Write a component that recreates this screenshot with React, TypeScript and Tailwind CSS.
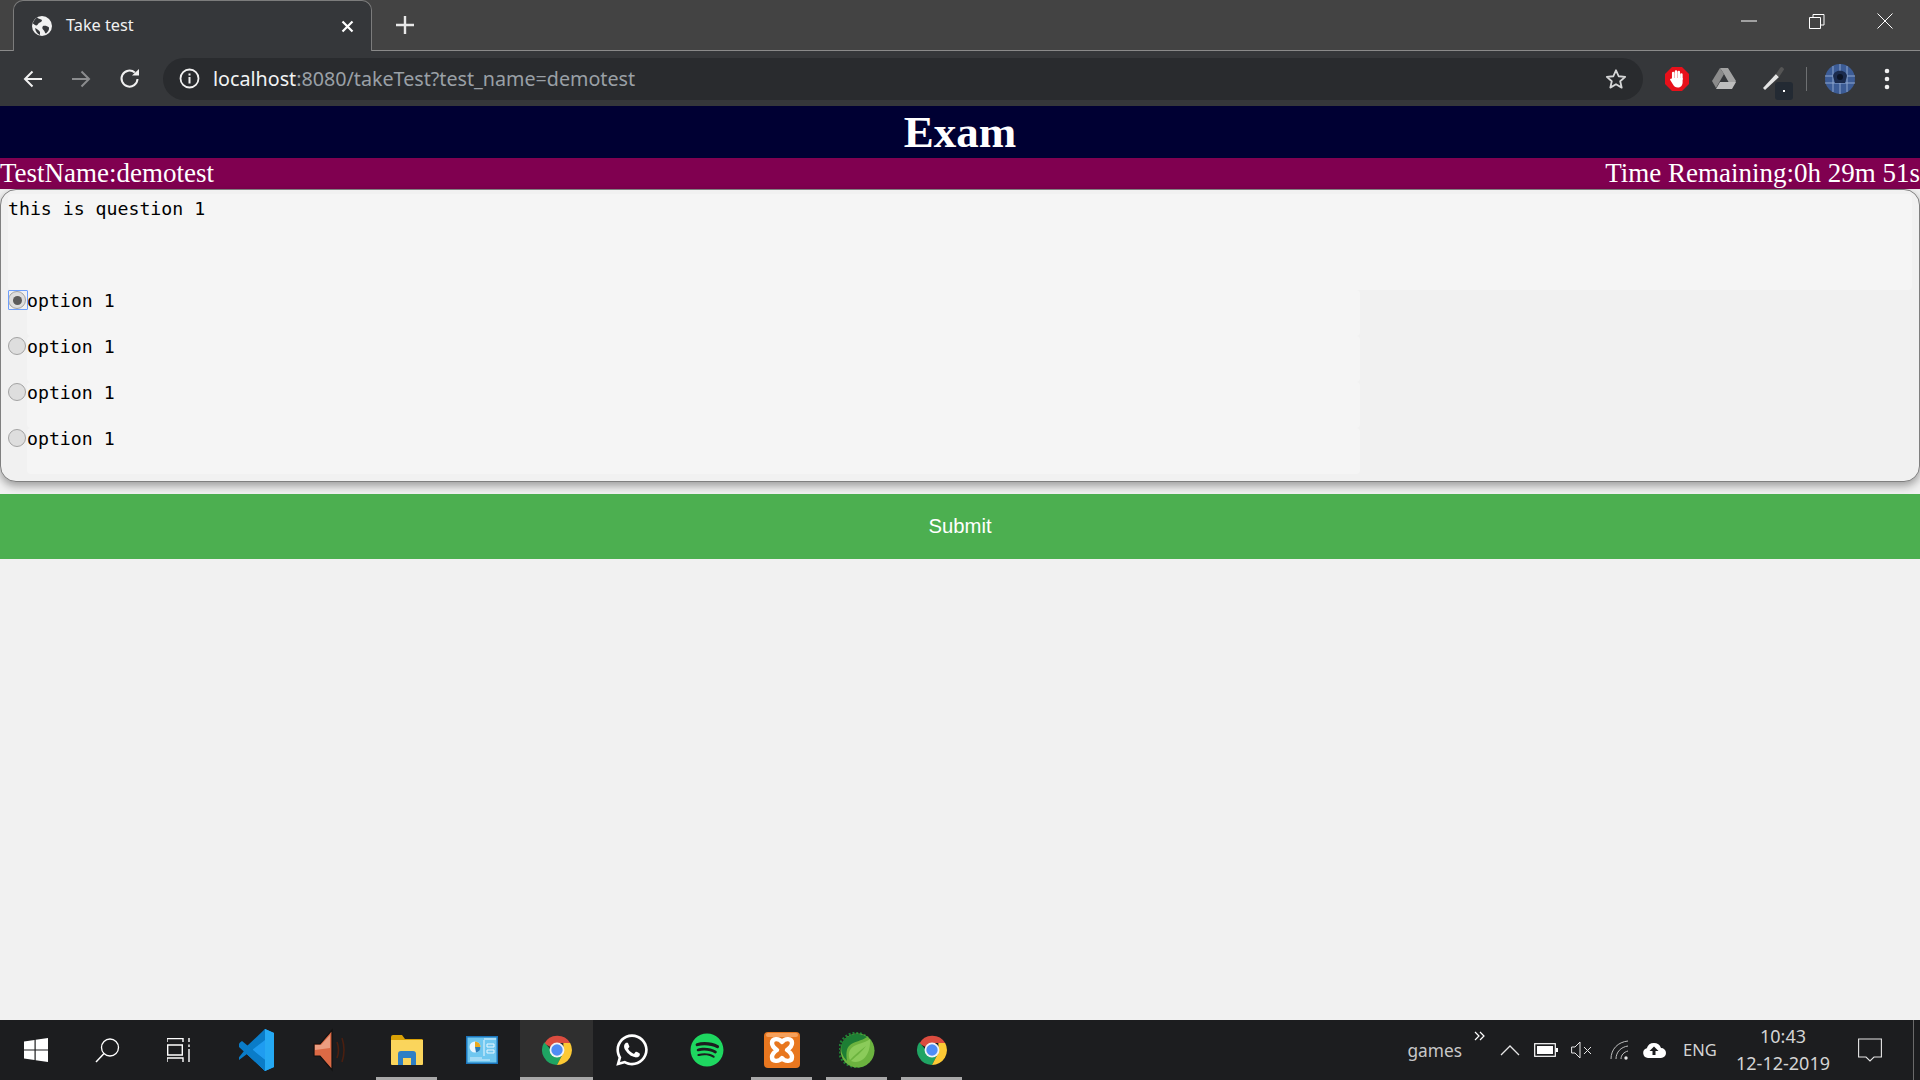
import React from "react";
import { FaWhatsapp, FaSpotify } from "react-icons/fa";

const ui = "font-['Noto_Sans',sans-serif]";

function Globe() {
  return (
    <svg width="20" height="20" viewBox="0 0 20 20">
      <circle cx="10" cy="10" r="10" fill="#f1f1f1" />
      <path d="M5 1.5 C7 3 9 3 10 4 C10 6 8 6.5 7 7 C5.5 8 6 9 4.5 9.5 C3 9.5 2 8 0.8 7.5 C1.3 5 3 3 5 1.5Z" fill="#35373a" />
      <path d="M11 10 C13 9.5 15.5 10 17 11.5 C17.5 14 15.5 16 14 17.5 C12.5 17 13 15 11.5 14 C10 13 10 11 11 10Z M3 12 C5 13 7 14 8 16 C8 17.5 8 18.5 8 19 C5.5 18 3.5 15.5 3 12Z" fill="#35373a" />
    </svg>
  );
}

function Chrome({ size = 34 }: { size?: number }) {
  return (
    <svg width={size} height={size} viewBox="0 0 48 48">
      <path d="M24 24 L6 15 A21 21 0 0 1 42.5 14 L24 14Z" fill="#db4c3f" />
      <path d="M6 13 A21 21 0 0 0 24 45 L33 28 L24 34 Z" fill="#1fa463" />
      <path d="M42.6 14 A21 21 0 0 1 24 45 L33 28 L33 14Z" fill="#fcc934" />
      <circle cx="24" cy="24" r="10.5" fill="#f1f3f4" />
      <circle cx="24" cy="24" r="8" fill="#4e8cf5" />
    </svg>
  );
}

function VsCode() {
  return (
    <svg width="36" height="44" viewBox="0 0 36 44">
      <path d="M26 1 L35 5 V39 L26 43 L8 26 L13 22Z" fill="#1f9cf0" />
      <path d="M26 1 L26 12 L13 22 L8 18Z" fill="#0a7cc8" />
      <path d="M26 43 L26 32 L13 22 L8 26Z" fill="#0a7cc8" />
      <path d="M26 1 L35 5 V39 L26 43Z" fill="#25a9f3" />
      <path d="M3 13 L26 32 V43 L0 19 Q-1 17 1 14.5Z M8 26 L0 32 Q-1 30 1 28 L5 23Z" fill="#0a7cc8" />
    </svg>
  );
}

function Speaker() {
  return (
    <svg width="38" height="44" viewBox="0 0 38 44">
      <path d="M1 16 H7 L19 2 V42 L7 28 H1Z" fill="#dc6a45" stroke="#111" strokeWidth="1.2" />
      <path d="M2 17 H8 L17 7 V20 L2 22Z" fill="#eb9d80" />
      <path d="M24 14 Q27 22 24 30 M29 10 Q33 22 29 34" stroke="#4a1f10" strokeWidth="1.6" fill="none" />
    </svg>
  );
}

function Files() {
  return (
    <svg width="32" height="32" viewBox="0 0 32 32">
      <path d="M0 3 Q0 1 2 1 H11 L14 5 H31 Q32 5 32 7 V12 H0Z" fill="#d9a106" />
      <path d="M0 6 H32 V30 Q32 31 31 31 H1 Q0 31 0 30Z" fill="#fad55c" />
      <path d="M7 31 V20 Q7 17 10 17 H22 Q25 17 25 20 V31 H20 V24 H12 V31Z" fill="#2e7fc4" />
    </svg>
  );
}

function Panel() {
  return (
    <svg width="32" height="28" viewBox="0 0 32 28">
      <rect width="32" height="28" fill="#1b75bb" />
      <rect x="1.5" y="1.5" width="29" height="25" fill="#6fc7f0" />
      <circle cx="9" cy="11" r="5.5" fill="#eaf6ff" />
      <path d="M9 11 V5.5 A5.5 5.5 0 0 1 14.5 11Z" fill="#eba91e" />
      <path d="M9 11 L14.5 11 A5.5 5.5 0 0 1 10 16.4Z" fill="#2a7dbb" />
      <path d="M18 3 H30 M18 4 V20 M21 8 H28 V11 H21Z M21 14 H28 V17 H21Z" stroke="#e8f6ff" strokeWidth="1" fill="none" />
      <path d="M4 22 H16 M4 24 H24" stroke="#d7eefb" strokeWidth="1" />
    </svg>
  );
}

function Xampp() {
  return (
    <svg width="36" height="36" viewBox="0 0 36 36">
      <rect width="36" height="36" rx="4" fill="#e8771f" />
      <rect x="2" y="1" width="32" height="4" rx="2" fill="#f6a15c" />
      <path d="M18 10 C15 6 8 6 8 11 C8 14 10 16 13 18 C10 20 8 22 8 25 C8 30 15 30 18 26 C21 30 28 30 28 25 C28 22 26 20 23 18 C26 16 28 14 28 11 C28 6 21 6 18 10Z" fill="none" stroke="#fff" strokeWidth="4.4" strokeLinejoin="round" />
    </svg>
  );
}

function Spring() {
  return (
    <svg width="36" height="36" viewBox="0 0 36 36">
      <circle cx="17" cy="18" r="17" fill="none" stroke="#1d7e34" strokeWidth="2.4" strokeDasharray="2 1.8" />
      <circle cx="18.5" cy="18.5" r="17" fill="#6cb33f" />
      <path d="M3 11 A17 17 0 0 1 28 5 C23 9 15 9 10 14 C7 17 7 24 8 29 A17 17 0 0 1 3 11Z" fill="#1d7e34" />
      <path d="M31 7 C26 12 15 11 11 18 C9 22 10 26 11 28 C15 23 21 19 27 14 C22 21 16 25 12 29 C22 33 32 24 31 7Z" fill="#8bcb5a" />
    </svg>
  );
}

function AdBlock() {
  return (
    <svg width="24" height="24" viewBox="0 0 24 24">
      <path d="M7 0 H17 L24 7 V17 L17 24 H7 L0 17 V7Z" fill="#e8101a" />
      <path d="M8.2 12 V6 M11 11 V4.5 M13.8 11 V5 M16.4 12 V7.5" stroke="#fff" strokeWidth="2.5" strokeLinecap="round" />
      <path d="M7 11 H17.6 V15.5 C17.6 18.5 15.5 20.5 12.8 20.5 C10.5 20.5 9 19.5 8 17.5 L5.2 13 C4.6 11.8 6.2 10.8 7 11.8Z" fill="#fff" />
    </svg>
  );
}

function TaskButton({
  children,
  underline,
  active,
}: {
  children: React.ReactNode;
  underline?: boolean;
  active?: boolean;
}) {
  return (
    <div className={`relative flex h-full items-center justify-center ${active ? "mx-px w-[73px] bg-[#2f2f2f]" : "w-[75px]"}`}>
      {children}
      {underline && <div className={`absolute bottom-0 h-[3px] bg-[#a8a8a8] ${active ? "inset-x-0" : "left-[7px] right-[7px]"}`} />}
    </div>
  );
}

function Radio({ checked }: { checked?: boolean }) {
  return (
    <div className="relative flex h-[46px] w-[19px] shrink-0 items-start justify-start">
      {checked && <div className="absolute left-0 top-0 h-[20px] w-[20px] rounded-[1px] border border-[#6e9ffb]" />}
      <div className="mt-[1px] flex h-[18px] w-[18px] items-center justify-center rounded-full border border-[#a3a3a3] bg-[#dedede]">
        {checked && <div className="h-[9px] w-[9px] rounded-full bg-[#5c5c5c]" />}
      </div>
    </div>
  );
}

function Option({ checked }: { checked?: boolean }) {
  return (
    <div className="flex">
      <Radio checked={checked} />
      <div className="h-[46px] w-[1333px] rounded-[4px] bg-[#f5f5f5] text-[18.2px] leading-[22px] text-black font-['DejaVu_Sans_Mono',monospace]">
        option 1
      </div>
    </div>
  );
}

export default function App() {
  return (
    <div className="flex h-[1080px] w-[1920px] flex-col overflow-hidden bg-[#f1f1f1]">
      {/* Tab strip */}
      <div className="relative flex h-[51px] shrink-0 border-b border-[#8a8a8a] bg-[#434343]">
        <div className="relative z-10 ml-[13px] flex h-[51px] w-[359px] items-center rounded-t-[10px] border border-b-0 border-[#7c7c7c] bg-[#35373a] pl-[18px] pr-[17px]">
          <Globe />
          <span className={`ml-[14px] flex-1 pb-[2px] text-[16.3px] text-[#f1f1f1] ${ui}`}>Take test</span>
          <svg width="13" height="13" viewBox="0 0 13 13"><path d="M1.5 1.5 L11.5 11.5 M11.5 1.5 L1.5 11.5" stroke="#fff" strokeWidth="2.2" /></svg>
        </div>
        <div className="z-10 ml-[24px] flex items-center">
          <svg width="18" height="18" viewBox="0 0 18 18"><path d="M9 0 V18 M0 9 H18" stroke="#e8e8e8" strokeWidth="2.4" /></svg>
        </div>
        <div className="flex-1" />
        <div className="mr-[1px] flex h-full w-[204px] items-start">
          <div className="flex h-[42px] w-[68px] items-center justify-center">
            <svg width="16" height="2" viewBox="0 0 16 2"><path d="M0 1 H16" stroke="#fff" /></svg>
          </div>
          <div className="flex h-[42px] w-[68px] items-center justify-center">
            <svg width="16" height="16" viewBox="0 0 16 16"><path d="M4 4 V1.5 H15 V12 H12 M.5 4.5 H11.5 V15.5 H.5Z" stroke="#fff" fill="none" /></svg>
          </div>
          <div className="flex h-[42px] w-[68px] items-center justify-center">
            <svg width="16" height="16" viewBox="0 0 16 16"><path d="M.5 .5 L15.5 15.5 M15.5 .5 L.5 15.5" stroke="#fff" /></svg>
          </div>
        </div>
      </div>

      {/* Toolbar */}
      <div className="flex h-[55px] shrink-0 items-center bg-[#35373a]">
        <div className="ml-[23px] flex w-[140px] items-center">
          <svg className="w-[48px]" width="20" height="18" viewBox="0 0 48 18" preserveAspectRatio="xMinYMid meet"><path d="M19 9 H2 M9.5 1.5 L2 9 L9.5 16.5" stroke="#f1f1f1" strokeWidth="2" fill="none" /></svg>
          <svg className="w-[48px]" width="20" height="18" viewBox="0 0 48 18" preserveAspectRatio="xMinYMid meet"><path d="M1 9 H18 M10.5 1.5 L18 9 L10.5 16.5" stroke="#8b8c8e" strokeWidth="2" fill="none" /></svg>
          <svg width="22" height="22" viewBox="0 0 22 22"><path d="M18.5 11 A8 8 0 1 1 15.8 4.6" stroke="#f1f1f1" strokeWidth="2" fill="none" /><path d="M13 7.5 H20 V1Z" fill="#f1f1f1" /></svg>
        </div>
        <div className="flex h-[42px] w-[1480px] items-center rounded-full bg-[#292b2e] pl-[16px] pr-[16px]">
          <svg width="21" height="21" viewBox="0 0 21 21"><circle cx="10.5" cy="10.5" r="9" stroke="#f1f1f1" strokeWidth="1.8" fill="none" /><path d="M10.5 9 V15.5 M10.5 5.5 V7.5" stroke="#f1f1f1" strokeWidth="2" /></svg>
          <span className={`ml-[13px] flex-1 text-[19.7px] leading-none text-[#9aa0a6] ${ui}`}>
            <span className="text-[#f1f3f4]">localhost</span>:8080/takeTest?test_name=demotest
          </span>
          <svg width="22" height="22" viewBox="0 0 24 24"><path d="M12 2.5 L14.9 9 L22 9.7 L16.6 14.4 L18.2 21.4 L12 17.7 L5.8 21.4 L7.4 14.4 L2 9.7 L9.1 9Z" stroke="#d5d6d7" strokeWidth="2" fill="none" strokeLinejoin="round" /></svg>
        </div>
        <div className="ml-[22px] flex items-center">
          <AdBlock />
          <svg className="ml-[23px]" width="24" height="22" viewBox="0 0 24 22">
            <path d="M8 0 H16 L24 13 L20 20 L12 6Z" fill="#a3a3a3" />
            <path d="M8 0 L12 6 L4 20 L0 13Z" fill="#8b8b8b" />
            <path d="M8 14 H24 L20 21 H4Z" fill="#bdbdbd" />
          </svg>
          <div className="relative ml-[25px] h-[26px] w-[24px]">
            <svg width="24" height="24" viewBox="0 0 24 24">
              <path d="M2 22 L15 8 L18 11 L4 24Z" fill="#e4e4e4" />
              <path d="M15 8 L19 2 Q21 0 22 2 Q24 3 22 5 L18 11Z" fill="#555" />
            </svg>
            <div className="absolute left-[14px] top-[16px] flex h-[18px] w-[18px] items-center justify-center rounded-[3px] bg-[#232a33]">
              <div className="h-[2px] w-[2px] bg-white" />
            </div>
          </div>
          <div className="ml-[21px] h-[24px] w-px bg-[#6e7072]" />
          <svg className="ml-[18px]" width="30" height="30" viewBox="0 0 30 30">
            <circle cx="15" cy="15" r="15" fill="#3c5c96" />
            <path d="M0 12 H30 M0 19 H30 M8 2 V28 M22 2 V28 M15 0 V30" stroke="#8ea6ce" strokeWidth="1" />
            <path d="M8 12 C9 5 21 5 22 12 L20 19 H10Z" fill="#1b2b4d" />
            <circle cx="15" cy="13" r="3" fill="#0c1426" />
          </svg>
          <svg className="ml-[29px]" width="6" height="22" viewBox="0 0 6 22"><circle cx="3" cy="3" r="2.3" fill="#f1f1f1" /><circle cx="3" cy="11" r="2.3" fill="#f1f1f1" /><circle cx="3" cy="19" r="2.3" fill="#f1f1f1" /></svg>
        </div>
      </div>

      {/* Page */}
      <div className="flex h-[52px] shrink-0 items-center justify-center bg-[#000033] text-[45px] font-bold leading-none text-white font-['Liberation_Serif',serif]">
        Exam
      </div>
      <div className="flex h-[31px] shrink-0 items-center justify-between bg-[#800050] text-[27px] leading-none text-white font-['Liberation_Serif',serif]">
        <span>TestName:demotest</span>
        <span>Time Remaining:0h 29m 51s</span>
      </div>
      <div className="h-[293px] shrink-0 rounded-[16px] border border-[#808080] bg-[#f1f1f1] px-[7px] pt-[4px] shadow-[0_4px_8px_rgba(0,0,0,0.35)]">
        <div className="h-[96px] rounded-[4px] bg-[#f5f5f5] pt-[4px] text-[18.2px] leading-[22px] text-black font-['DejaVu_Sans_Mono',monospace]">
          this is question 1
        </div>
        <Option checked />
        <Option />
        <Option />
        <Option />
      </div>
      <div className="mt-[12px] flex h-[65px] shrink-0 items-center justify-center bg-[#4caf50] text-[20.3px] text-white font-['Liberation_Sans',sans-serif]">
        Submit
      </div>
      <div className="flex-1" />

      {/* Taskbar */}
      <div className="flex h-[60px] shrink-0 items-center bg-[#1c1d1f] text-[#d4d4d4]">
        <div className="flex h-full w-[71px] items-center justify-center">
          <svg width="24" height="24" viewBox="0 0 24 24"><path d="M0 3.5 L10.5 2 V11.4 H0Z M11.7 1.8 L24 0 V11.4 H11.7Z M0 12.6 H10.5 V22 L0 20.5Z M11.7 12.6 H24 V24 L11.7 22.2Z" fill="#fff" /></svg>
        </div>
        <div className="flex h-full w-[73px] items-center justify-center">
          <svg width="25" height="25" viewBox="0 0 25 25"><circle cx="15" cy="9.5" r="8.5" stroke="#fff" strokeWidth="1.3" fill="none" /><path d="M9 15.5 L1 24" stroke="#fff" strokeWidth="1.5" /></svg>
        </div>
        <div className="flex h-full w-[69px] items-center justify-center">
          <svg width="24" height="24" viewBox="0 0 24 24"><path d="M0 4 V.5 H16 V4 M0.7 7 H15.3 V17 H0.7Z M0 24 V20 H16 V24 M22 0 V4 M22 6.5 V9 M22 11 V24" stroke="#fff" strokeWidth="1.4" fill="none" /></svg>
        </div>
        <div className="flex h-full w-[6px]" />
        <TaskButton><VsCode /></TaskButton>
        <TaskButton><Speaker /></TaskButton>
        <TaskButton underline><Files /></TaskButton>
        <TaskButton><Panel /></TaskButton>
        <TaskButton underline active><Chrome /></TaskButton>
        <TaskButton><FaWhatsapp size={36} color="#fff" /></TaskButton>
        <TaskButton><FaSpotify size={34} color="#1ed760" /></TaskButton>
        <TaskButton underline><Xampp /></TaskButton>
        <TaskButton underline><Spring /></TaskButton>
        <TaskButton underline><Chrome /></TaskButton>
        <div className="flex-1" />
        <div className={`relative mr-[18px] pt-[2px] text-[17.3px] text-[#c8c8c8] ${ui}`}>
          games
          <svg className="absolute -right-[24px] -top-[5px]" width="12" height="10" viewBox="0 0 12 10"><path d="M1 1 L5 5 L1 9 M6 1 L10 5 L6 9" stroke="#fff" strokeWidth="1.2" fill="none" /></svg>
        </div>
        <svg className="ml-[20px]" width="20" height="11" viewBox="0 0 20 11"><path d="M1 10 L10 1 L19 10" stroke="#e6e6e6" strokeWidth="1.3" fill="none" /></svg>
        <svg className="ml-[14px]" width="24" height="14" viewBox="0 0 24 14"><rect x=".7" y=".7" width="20.6" height="12.6" stroke="#fff" strokeWidth="1.2" fill="none" /><rect x="3" y="3" width="16" height="8" fill="#fff" /><rect x="22" y="5" width="2" height="4" fill="#fff" /></svg>
        <svg className="ml-[13px]" width="22" height="18" viewBox="0 0 22 18"><path d="M.6 6 H4 L9 1 V17 L4 12 H.6Z" stroke="#e6e6e6" fill="none" /><path d="M13 6 L20 13 M20 6 L13 13" stroke="#e6e6e6" /></svg>
        <svg className="ml-[17px]" width="20" height="20" viewBox="0 0 20 20"><path d="M1 19 C1 9 8 2 18 1 M6 19 C6 12 11 7 18 6 M11 19 C11 15 14 12 18 11" stroke="#bdbdbd" fill="none" /><circle cx="16" cy="18" r="1.7" fill="#e6e6e6" /></svg>
        <svg className="ml-[12px]" width="24" height="16" viewBox="0 0 24 16"><path d="M6 16 A5 5 0 0 1 4.8 6.2 A7.5 7.5 0 0 1 19 6 A5 5 0 0 1 19 16Z" fill="#fff" /><path d="M12 4.5 L7.5 9 H10.5 V13 H13.5 V9 H16.5Z" fill="#1c1d1f" /></svg>
        <span className={`ml-[17px] w-[33px] text-[16.5px] text-[#d4d4d4] ${ui}`}>ENG</span>
        <div className={`ml-[20px] flex w-[94px] flex-col items-center text-[18px] leading-[27px] text-[#d4d4d4] ${ui}`}>
          <span>10:43</span>
          <span>12-12-2019</span>
        </div>
        <svg className="ml-[28px]" width="24" height="24" viewBox="0 0 24 24"><path d="M.6 1 H23.4 V19 H16 L12 23 L8 19 H.6Z" stroke="#e6e6e6" strokeWidth="1.1" fill="none" /></svg>
        <div className="ml-[31px] h-full w-px bg-[#6a6a6a]" />
        <div className="w-[6px]" />
      </div>
    </div>
  );
}
